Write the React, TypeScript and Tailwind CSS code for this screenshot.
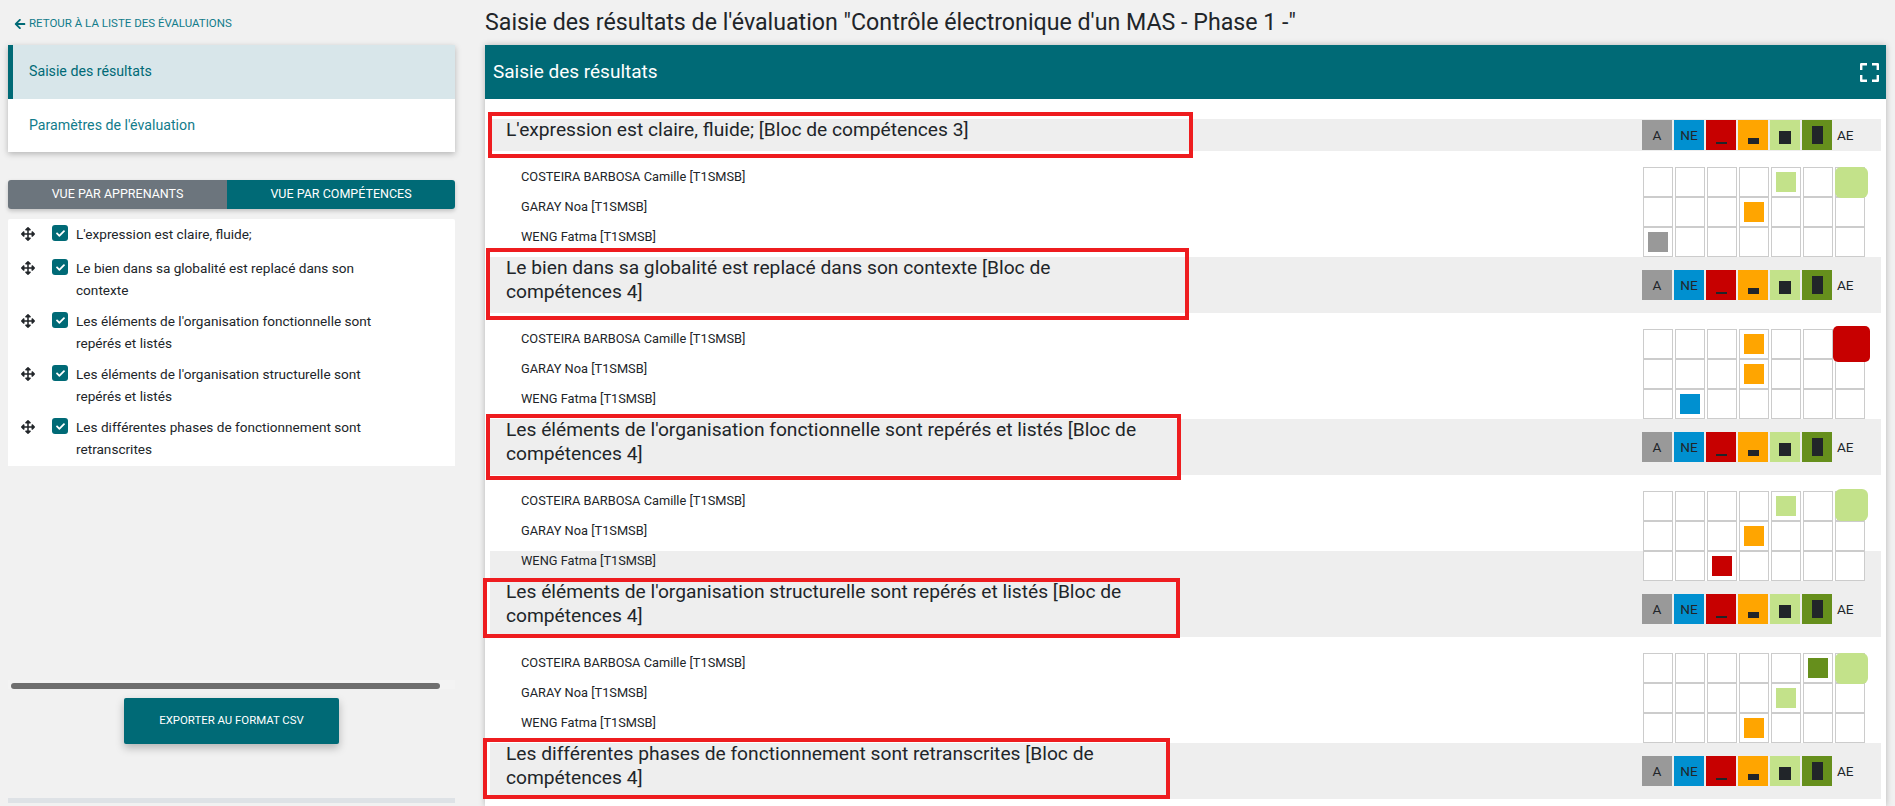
import React from 'react';
import { FaArrowLeft, FaArrowsAlt, FaCheck } from 'react-icons/fa';

const TEAL = 'bg-[#006a76]';

const COMPETENCES = [
  "L'expression est claire, fluide;",
  'Le bien dans sa globalité est replacé dans son contexte',
  "Les éléments de l'organisation fonctionnelle sont repérés et listés",
  "Les éléments de l'organisation structurelle sont repérés et listés",
  'Les différentes phases de fonctionnement sont retranscrites',
];

const MARK_COLORS = ['bg-[#999999]', 'bg-[#0090d0]', 'bg-[#c70000]', 'bg-[#ffa500]', 'bg-[#c3e28a]', 'bg-[#668f1c]'];

const NAMES = ['COSTEIRA BARBOSA Camille [T1SMSB]', 'GARAY Noa [T1SMSB]', 'WENG Fatma [T1SMSB]'];

interface Group {
  title: string;
  box: string;
  marks: number[];
  ae?: string;
  hoverRow?: number;
}

const GROUPS: Group[] = [
  {
    title: "L'expression est claire, fluide; [Bloc de compétences 3]",
    box: '-left-[2px] -top-[7px] w-[705px] h-[46px]',
    marks: [4, 3, 0],
    ae: '-top-px -left-px w-[33px] h-[31px] rounded-[6px] bg-[#c3e28a]',
  },
  {
    title: 'Le bien dans sa globalité est replacé dans son contexte [Bloc de compétences 4]',
    box: '-left-[4px] -top-[9px] w-[703px] h-[72px]',
    marks: [3, 3, 1],
    ae: '-top-[4px] -left-[3px] w-[37px] h-[36px] rounded-[5px] bg-[#c70000]',
  },
  {
    title: "Les éléments de l'organisation fonctionnelle sont repérés et listés [Bloc de compétences 4]",
    box: '-left-[4px] -top-[5px] w-[695px] h-[66px]',
    marks: [4, 3, 2],
    ae: '-top-[3px] -left-px w-[33px] h-[32px] rounded-[6px] bg-[#c3e28a]',
    hoverRow: 2,
  },
  {
    title: "Les éléments de l'organisation structurelle sont repérés et listés [Bloc de compétences 4]",
    box: '-left-[7px] -top-[3px] w-[697px] h-[60px]',
    marks: [5, 4, 3],
    ae: '-top-px -left-px w-[33px] h-[31px] rounded-[6px] bg-[#c3e28a]',
  },
  {
    title: 'Les différentes phases de fonctionnement sont retranscrites [Bloc de compétences 4]',
    box: '-left-[7px] -top-[5px] w-[687px] h-[61px]',
    marks: [],
  },
];

// Légende des niveaux : A, NE puis les barres
const Legend: React.FC = () => {
  const bars = ['w-[11px] h-[2px]', 'w-[11px] h-[6px]', 'w-[12px] h-[13px]', 'w-[11px] h-[18px]'];
  return (
    <div className="flex items-center gap-[2px] w-[239px] shrink-0 text-[13.6px] text-[#212529]">
      <div className={`w-[30px] h-[30px] flex items-center justify-center ${MARK_COLORS[0]}`}>A</div>
      <div className={`w-[30px] h-[30px] flex items-center justify-center ${MARK_COLORS[1]}`}>NE</div>
      {bars.map((b, i) => (
        <div key={b} className={`w-[30px] h-[30px] flex items-end justify-center pb-[6px] ${MARK_COLORS[i + 2]}`}>
          <div className={`${b} bg-[#212529]`} />
        </div>
      ))}
      <div className="ml-[3px]">AE</div>
    </div>
  );
};

const ResultGroup: React.FC<{ group: Group }> = ({ group }) => (
  <div>
    <div className="relative flex items-center justify-between bg-[#eeeeee]">
      <div className="self-start w-[650px] pl-[16px] pb-[9px] -mt-px text-[19.2px] leading-[24px] text-[#212529]">{group.title}</div>
      <Legend />
      <div className={`absolute z-20 border-[4px] border-[#ee1c1f] ${group.box}`} />
    </div>
    {group.marks.length > 0 && (
      <div className="mt-4">
        {NAMES.map((name, row) => (
          <div
            key={name}
            className={`flex justify-between h-[30px] pl-[31px] pr-[16px] ${group.hoverRow === row ? 'bg-[#eeeeee]' : ''}`}
          >
            <div className="text-[12.8px] leading-[20px] text-[#212529]">{name}</div>
            <div className="flex gap-[2px] bg-white">
              {Array.from({ length: 7 }, (_, col) => (
                <div key={col} className="relative w-[30px] h-[30px] p-[4px] border border-[#cccccc] bg-white">
                  {group.marks[row] === col && <div className={`w-5 h-5 ${MARK_COLORS[col]}`} />}
                  {col === 6 && row === 0 && group.ae && <div className={`absolute z-10 ${group.ae}`} />}
                </div>
              ))}
            </div>
          </div>
        ))}
      </div>
    )}
  </div>
);

export default function App() {
  return (
    <div className="flex h-[806px] w-[1895px] overflow-hidden bg-[#f1f1f1] font-['Roboto',sans-serif] text-[#212529]">
      {/* Colonne de gauche */}
      <div className="w-[447px] ml-2 shrink-0 flex flex-col">
        <div className="h-[45px] shrink-0 pl-[6px] pt-[2px] flex items-center gap-[3px] text-[11.5px] uppercase text-[#127c8b]">
          <FaArrowLeft className="w-3 h-3 text-[#006a76]" />
          <span>Retour à la liste des évaluations</span>
        </div>

        <div className="bg-white shadow-[0_2px_6px_rgba(0,0,0,0.25)]">
          <div className="h-[54px] flex items-center pl-[16px] border-l-[5px] border-[#006a76] bg-[#d8e6ea] text-[14.2px] text-[#006a76]">
            Saisie des résultats
          </div>
          <div className="h-[53px] flex items-center pl-[21px] text-[14.2px] text-[#127c8b]">Paramètres de l'évaluation</div>
        </div>

        <div className="mt-7 h-[29px] shrink-0 flex rounded-[3px] overflow-hidden shadow-[0_2px_4px_rgba(0,0,0,0.2)] text-[12.5px] uppercase text-white">
          <div className="w-[219px] flex items-center justify-center bg-[#6c757d]">Vue par apprenants</div>
          <div className={`flex-1 flex items-center justify-center ${TEAL}`}>Vue par compétences</div>
        </div>

        <div className="mt-[10px] bg-white pt-1 pb-[6px] flex flex-col gap-[9px] rounded-t-[2px]">
          {COMPETENCES.map(c => (
            <div key={c} className="flex min-h-[25px]">
              <FaArrowsAlt className="w-[14px] h-[14px] ml-[13px] mt-[4px] shrink-0 text-[#212529]" />
              <div className="w-4 h-4 ml-[17px] mt-[2px] shrink-0 rounded-[3px] flex items-center justify-center bg-[#006a76]">
                <FaCheck className="w-[9px] h-[9px] text-white" />
              </div>
              <div className="w-[310px] ml-2 text-[13.6px] leading-[22px] text-[#212529]">{c}</div>
            </div>
          ))}
        </div>

        <div className="mt-[214px] h-[9px] shrink-0 pt-[3px] bg-[#f3f3f3]">
          <div className="ml-[3px] w-[429px] h-[6px] rounded-full bg-[#6f6f6f]" />
        </div>

        <div className={`mt-[9px] ml-[116px] w-[215px] h-[46px] shrink-0 flex items-center justify-center rounded-[2px] shadow-[0_4px_8px_rgba(0,0,0,0.25)] text-[11.4px] uppercase text-white ${TEAL}`}>
          Exporter au format CSV
        </div>

        <div className="mt-[54px] h-[5px] shrink-0 bg-[#dee2e6]" />
      </div>

      {/* Colonne de droite */}
      <div className="w-[1401px] ml-[30px] shrink-0 flex flex-col">
        <div className="h-[45px] shrink-0 flex items-center text-[23.2px] text-[#212529]">
          Saisie des résultats de l'évaluation "Contrôle électronique d'un MAS - Phase 1 -"
        </div>
        <div className="flex-1 min-h-0 bg-white shadow-[0_0_6px_rgba(0,0,0,0.25)] rounded-t-[2px]">
          <div className={`h-[54px] flex items-center justify-between pl-2 pr-[7px] text-[19px] text-white ${TEAL}`}>
            <span>Saisie des résultats</span>
            <svg width="19" height="19" viewBox="0 0 19 19" fill="none" stroke="white" strokeWidth="2.4" strokeLinejoin="round">
              <path d="M1.2 7V1.2H7" />
              <path d="M12 1.2H17.8V7" />
              <path d="M1.2 12V17.8H7" />
              <path d="M12 17.8H17.8V12" />
            </svg>
          </div>
          <div className="pt-5 px-[5px]">
            {GROUPS.map(g => (
              <ResultGroup key={g.title} group={g} />
            ))}
          </div>
        </div>
      </div>
    </div>
  );
}
